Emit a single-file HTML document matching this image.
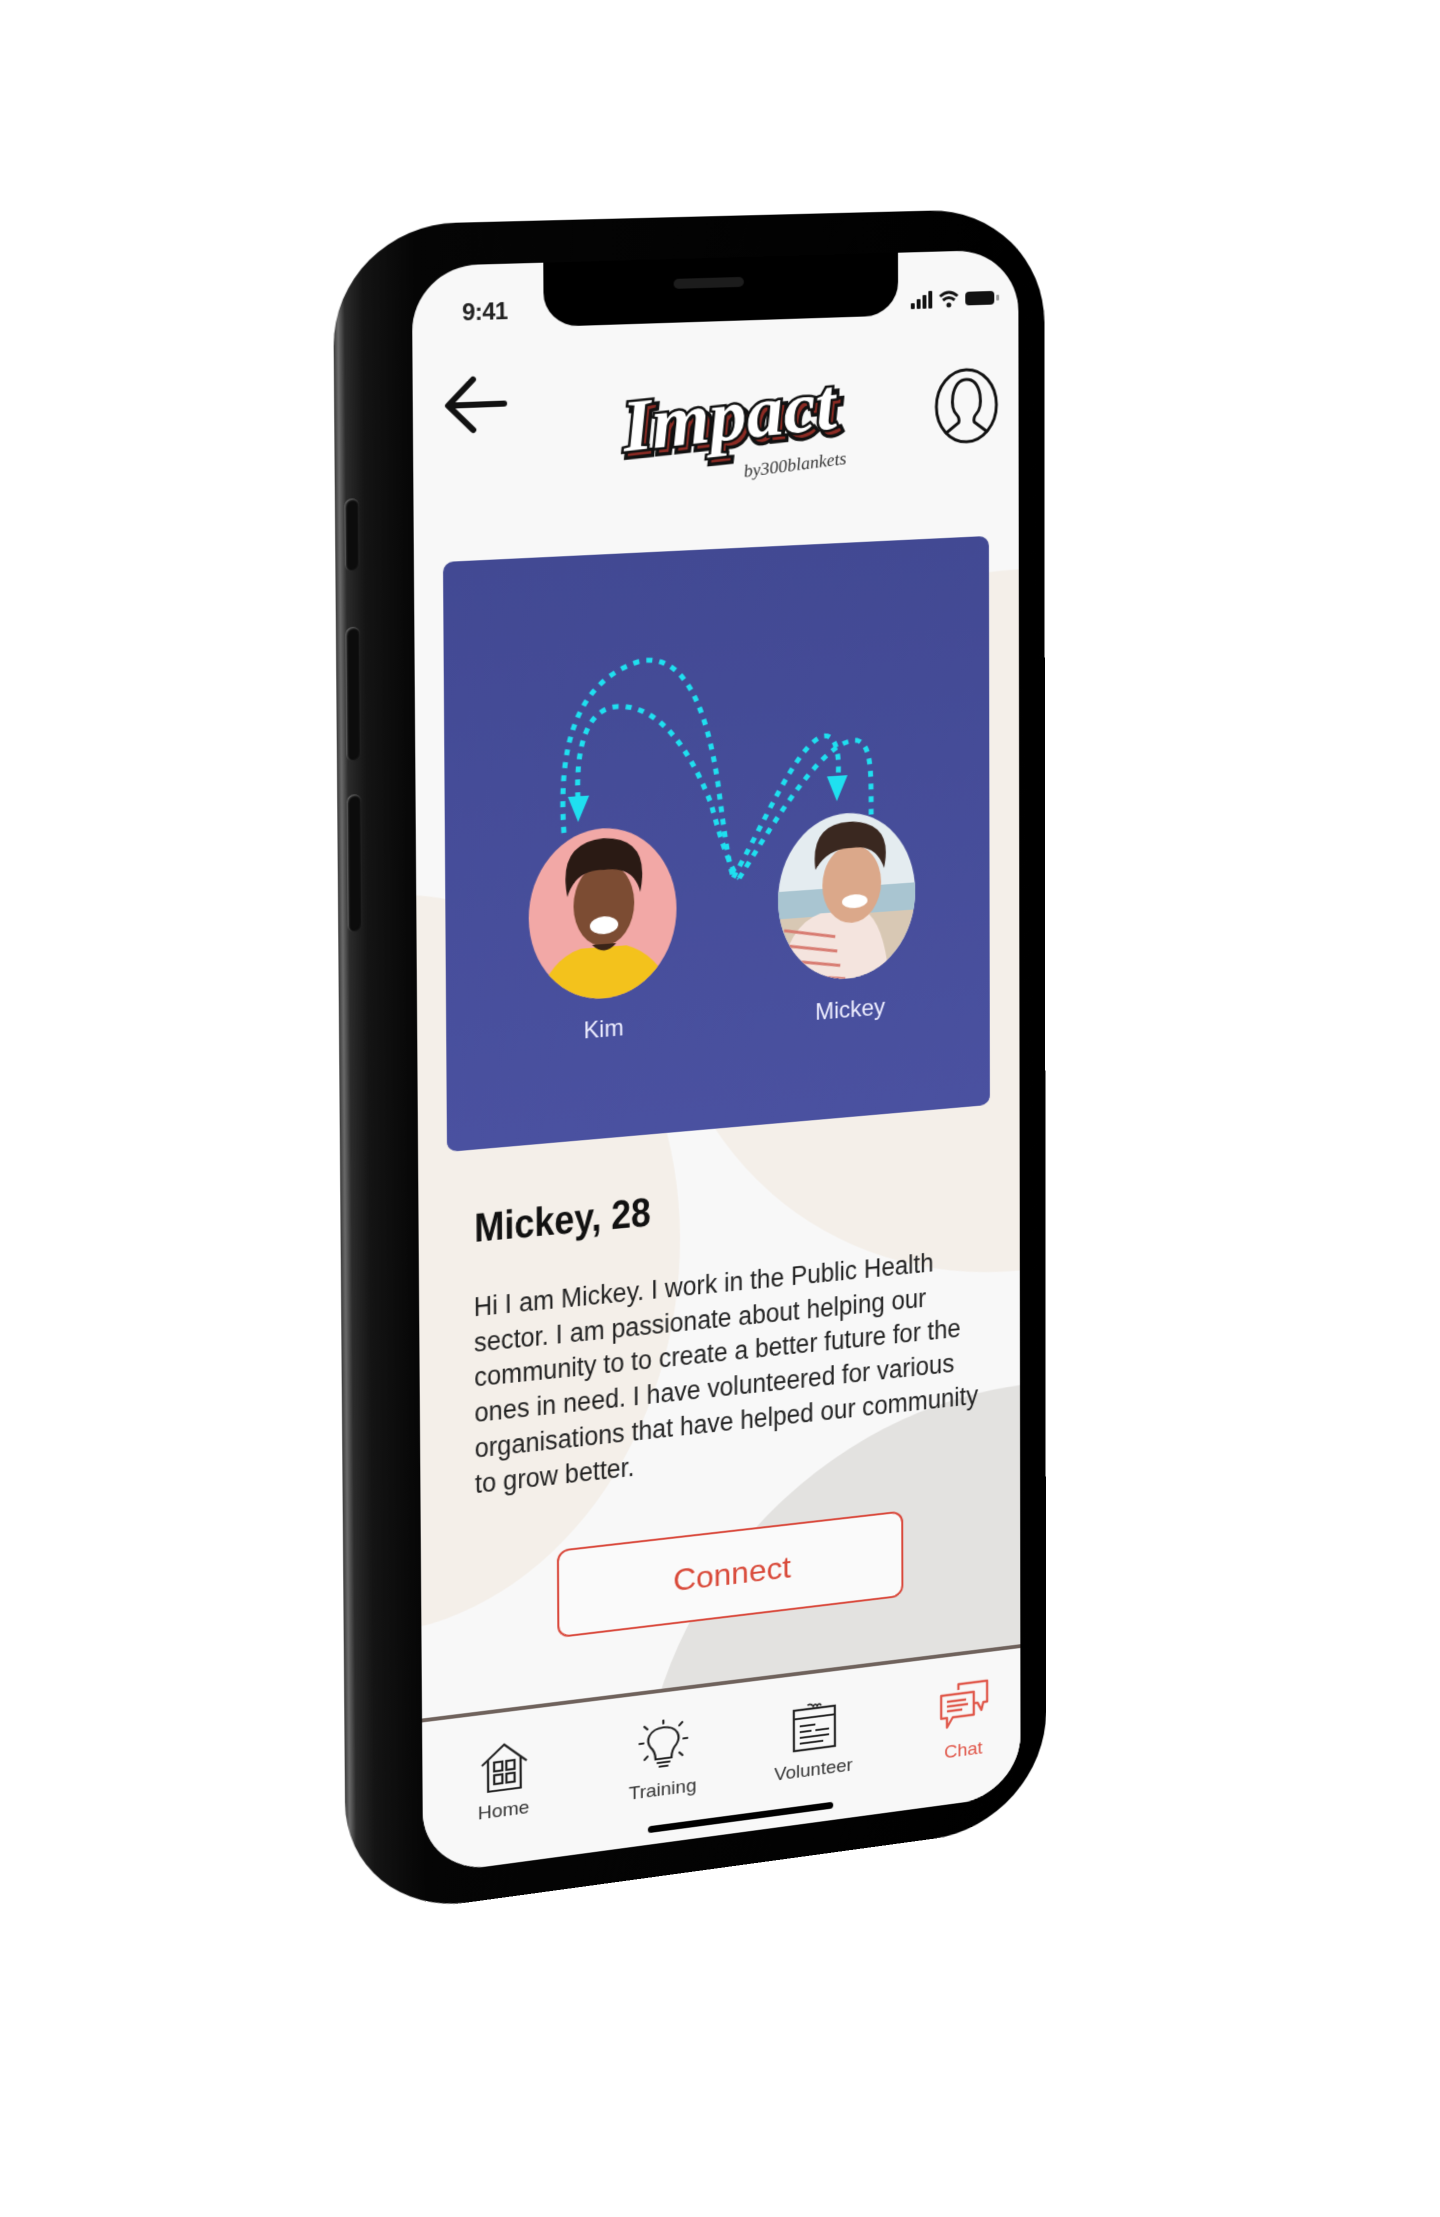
<!DOCTYPE html>
<html><head><meta charset="utf-8"><style>
html,body{margin:0;padding:0;background:#fff;}
body{width:1440px;height:2160px;overflow:hidden;position:relative;font-family:"Liberation Sans",sans-serif;}
#w{position:absolute;left:0;top:0;width:1440px;height:2160px;transform-origin:0 0;
transform:matrix3d(1.10724,-0.01138,0,0.00007122, 0.011333,1.04805,0,0.000009624, 0,0,1,0, -37.507,-1.1915,0,1);}
.phone{position:absolute;left:340px;top:226px;width:707px;height:1688px;border-radius:118px;
background:linear-gradient(to right,#3a3a3a 0,#6a6a6a 0.6%,#2b2b2b 1.5%,#141414 4%,#0b0b0b 8%,#050505 11%,#000 100%);}
.btn{position:absolute;left:349px;width:14px;border-radius:7px;background:#0c0c0c;box-shadow:inset 1px 1px 2px #777, inset -1px -1px 2px #222;}
.screen{position:absolute;left:415px;top:268px;width:605px;height:1612px;border-radius:64px;background:#f8f8f8;overflow:hidden;}
.abs{position:absolute;}
.lbl{position:absolute;font-size:19px;color:#333;transform:translateX(-50%);white-space:nowrap;}
</style></head><body>
<div id="w">
 <div class="phone"></div>
 <div class="btn" style="top:495px;height:72px"></div>
 <div class="btn" style="top:622px;height:133px"></div>
 <div class="btn" style="top:788px;height:137px"></div>
 <div class="screen">
  <!-- blobs -->
  <div class="abs" style="left:240px;top:330px;width:730px;height:730px;border-radius:50%;background:#f4efe9"></div>
  <div class="abs" style="left:-323px;top:622px;width:580px;height:740px;border-radius:50%;background:#f4efe9"></div>
  <div class="abs" style="left:215px;top:1180px;width:804px;height:804px;border-radius:50%;background:#e3e2e0"></div>
  <div class="abs" style="left:0;top:1455px;width:605px;height:200px;background:#f8f8f8"></div>
  <div class="abs" style="left:0;top:1453px;width:605px;height:4px;background:#6f625c"></div>
  <!-- notch -->
  <div class="abs" style="left:127px;top:-2px;width:354px;height:66px;background:#000;border-radius:0 0 34px 34px"></div>
  <div class="abs" style="left:255px;top:20px;width:70px;height:10px;border-radius:5px;background:#1c1c1c"></div>
  <!-- status -->
  <div class="abs" style="left:48px;top:34px;font-size:23px;font-weight:bold;color:#222;letter-spacing:-0.5px">9:41</div>
  <svg class="abs" style="left:494px;top:38px" width="96" height="24" viewBox="0 0 96 24">
   <rect x="0" y="14" width="4" height="6" rx="1" fill="#111"/><rect x="6" y="10" width="4" height="10" rx="1" fill="#111"/><rect x="12" y="6" width="4" height="14" rx="1" fill="#111"/><rect x="18" y="2" width="4" height="18" rx="1" fill="#111"/>
   <path d="M30 8 Q39 0 48 8" stroke="#111" stroke-width="3" fill="none"/><path d="M33 12 Q39 7 45 12" stroke="#111" stroke-width="3" fill="none"/><circle cx="39" cy="17" r="2.5" fill="#111"/>
   <rect x="56" y="4" width="30" height="14" rx="4" fill="#111"/><rect x="88" y="8" width="3" height="6" rx="1" fill="#999"/>
  </svg>
  <!-- back arrow -->
  <svg class="abs" style="left:28px;top:106px" width="66" height="66" viewBox="0 0 66 66">
   <path d="M60 33 H8 M30 8 L6 33 L30 58" stroke="#111" stroke-width="6" fill="none" stroke-linecap="round" stroke-linejoin="round"/>
  </svg>
  <!-- logo -->
  <svg class="abs" style="left:176px;top:108px" width="270" height="124" viewBox="0 0 270 124">
   <text x="135" y="76" text-anchor="middle" font-family="Liberation Serif" font-style="italic" font-weight="bold" font-size="74" fill="#8b2b24" stroke="#111" stroke-width="7" paint-order="stroke" transform="translate(4,5) rotate(-4 135 60)">Impact</text>
   <text x="135" y="76" text-anchor="middle" font-family="Liberation Serif" font-style="italic" font-weight="bold" font-size="74" fill="#fff" stroke="#111" stroke-width="5" paint-order="stroke" transform="rotate(-4 135 60)">Impact</text>
   <text x="200" y="110" text-anchor="middle" font-family="Liberation Serif" font-style="italic" font-size="18" fill="#333" transform="rotate(-5 200 106)">by300blankets</text>
  </svg>
  <!-- profile -->
  <svg class="abs" style="left:516px;top:118px" width="70" height="82" viewBox="0 0 70 82">
   <ellipse cx="35" cy="41" rx="31" ry="37" fill="none" stroke="#111" stroke-width="3"/>
   <path d="M13 69 L27 58 Q28 53 25 50 Q19 44 21 30 Q24 14 35 14 Q46 14 49 30 Q51 44 45 50 Q42 53 43 58 L57 69" fill="none" stroke="#111" stroke-width="3" stroke-linejoin="round"/>
  </svg>
  <!-- card -->
  <div class="abs" style="left:28px;top:294px;width:546px;height:590px;border-radius:10px;background:linear-gradient(#424993,#4a51a0)">
   <svg class="abs" style="left:0;top:0" width="546" height="590" viewBox="443 562 546 590">
    <defs>
     <clipPath id="ck"><ellipse cx="597" cy="924" rx="73" ry="86"/></clipPath>
     <clipPath id="cm"><ellipse cx="842" cy="924" rx="70" ry="85"/></clipPath>
    </defs>
    <g fill="none" stroke="#1fe0f0" stroke-width="5" stroke-dasharray="6 7" stroke-linecap="butt">
     <path d="M559,840 C554,760 568,690 633,672 C690,660 706,760 712,800 C718,850 722,880 727,897"/>
     <path d="M573,806 C571,760 580,716 612,716 C660,716 690,780 705,820 C715,860 725,890 733,898"/>
     <path d="M727,897 C760,840 790,770 816,759 C830,754 836,775 833,805"/>
     <path d="M733,898 C770,840 820,760 853,765 C868,770 867,800 867,842"/>
    </g>
    <path d="M563,804 L584,804 L573,830 Z" fill="#1fe0f0"/>
    <path d="M822,800 L843,800 L832,826 Z" fill="#1fe0f0"/>
    <g clip-path="url(#ck)">
     <rect x="520" y="830" width="160" height="200" fill="#f2a8a6"/>
     <path d="M528,1020 Q540,968 575,958 L620,958 Q655,970 670,1020 Z" fill="#f3c21c"/>
     <ellipse cx="598" cy="915" rx="30" ry="42" fill="#7c4c33"/>
     <path d="M562,905 Q552,850 598,848 Q645,850 634,905 Q628,878 598,880 Q570,878 562,905Z" fill="#2a1a14"/>
     <ellipse cx="598" cy="936" rx="14" ry="9" fill="#fff"/>
     <path d="M586,955 Q598,968 610,955" fill="#3a2418"/>
    </g>
    <g clip-path="url(#cm)">
     <rect x="770" y="835" width="150" height="180" fill="#e4ecf0"/>
     <rect x="770" y="915" width="150" height="30" fill="#a9c5d1"/>
     <rect x="770" y="943" width="150" height="70" fill="#d8c8b4"/>
     <path d="M772,1012 Q780,950 815,940 L860,940 Q880,955 885,1012 Z" fill="#f4e4de"/>
     <g stroke="#d87c72" stroke-width="3"><path d="M778,955 L830,965 M776,970 L832,980 M775,985 L835,995 M775,1000 L840,1009"/></g>
     <ellipse cx="847" cy="912" rx="30" ry="40" fill="#dba88a"/>
     <path d="M810,895 Q804,846 848,848 Q890,852 880,898 Q872,872 846,875 Q822,874 810,895Z" fill="#3a2820"/>
     <ellipse cx="850" cy="930" rx="13" ry="7" fill="#fff"/>
    </g>
    <text x="597" y="1049" text-anchor="middle" font-family="Liberation Sans" font-size="23" fill="#eef">Kim</text>
    <text x="845" y="1049" text-anchor="middle" font-family="Liberation Sans" font-size="23" fill="#eef">Mickey</text>
   </svg>
  </div>
  <!-- profile text -->
  <div class="abs" style="left:54px;top:940px;font-size:41px;font-weight:bold;color:#111;transform:scaleX(0.86);transform-origin:0 0;white-space:nowrap">Mickey, 28</div>
  <div class="abs" style="left:53px;top:1026px;font-size:27px;line-height:35.7px;color:#222;transform:scaleX(0.92);transform-origin:0 0;white-space:nowrap">Hi I am Mickey. I work in the Public Health<br>sector. I am passionate about helping our<br>community to to create a better future for the<br>ones in need. I have volunteered for various<br>organisations that have helped our community<br>to grow better.</div>
  <!-- connect -->
  <div class="abs" style="left:133px;top:1298px;width:346px;height:86px;border:2.5px solid #d9473a;border-radius:12px;background:#fafafa;color:#d94a3a;font-size:32px;text-align:center;line-height:86px">Connect</div>
  <!-- nav -->
  <svg class="abs" style="left:55px;top:1487px" width="50" height="52" viewBox="0 0 50 52">
   <g fill="none" stroke="#222" stroke-width="2.2"><path d="M3 22 L25 3 L47 22"/><path d="M9 17 V49 H41 V17"/><rect x="15" y="20" width="8" height="9"/><rect x="27" y="20" width="8" height="9"/><rect x="15" y="33" width="8" height="9"/><rect x="27" y="33" width="8" height="9"/></g>
  </svg>
  <div class="lbl" style="left:79px;top:1547px">Home</div>
  <svg class="abs" style="left:212px;top:1485px" width="52" height="54" viewBox="0 0 52 54">
   <g fill="none" stroke="#222" stroke-width="2.2" stroke-linecap="round"><path d="M18 40 Q18 32 13 27 Q9 21 12 15 Q16 8 26 8 Q36 8 40 15 Q43 21 39 27 Q34 32 34 40 Z"/><path d="M20 44 H32 M22 48 H30"/><path d="M26 1 V4 M6 22 H2 M46 22 H50 M10 8 L7 5 M42 8 L45 5 M10 36 L7 39 M42 36 L45 39"/></g>
  </svg>
  <div class="lbl" style="left:237px;top:1547px">Training</div>
  <svg class="abs" style="left:366px;top:1485px" width="50" height="54" viewBox="0 0 50 54">
   <g fill="none" stroke="#222" stroke-width="2.2"><rect x="4" y="8" width="42" height="42"/><path d="M4 17 H46"/><path d="M18 4 Q22 2 24 6 Q26 2 28 6 Q30 2 32 6" stroke-width="1.6"/><path d="M10 25 H26 M10 31 H22 M26 31 H40 M10 37 H40 M10 43 H34" stroke-width="2"/></g>
  </svg>
  <div class="lbl" style="left:390px;top:1547px">Volunteer</div>
  <svg class="abs" style="left:520px;top:1483px" width="52" height="54" viewBox="0 0 52 54">
   <g fill="none" stroke="#e0574a" stroke-width="2.4" stroke-linejoin="round"><path d="M20 10 V4 H50 V26 H46 L44 34 L40 26 H36"/><path d="M2 14 H36 V38 H14 L8 48 V38 H2 Z"/><path d="M8 21 H28 M8 26 H30 M8 31 H24"/></g>
  </svg>
  <div class="lbl" style="left:545px;top:1547px;color:#e0574a">Chat</div>
  <div class="abs" style="left:222px;top:1593px;width:188px;height:7px;border-radius:4px;background:#000"></div>
 </div>
</div>
</body></html>
